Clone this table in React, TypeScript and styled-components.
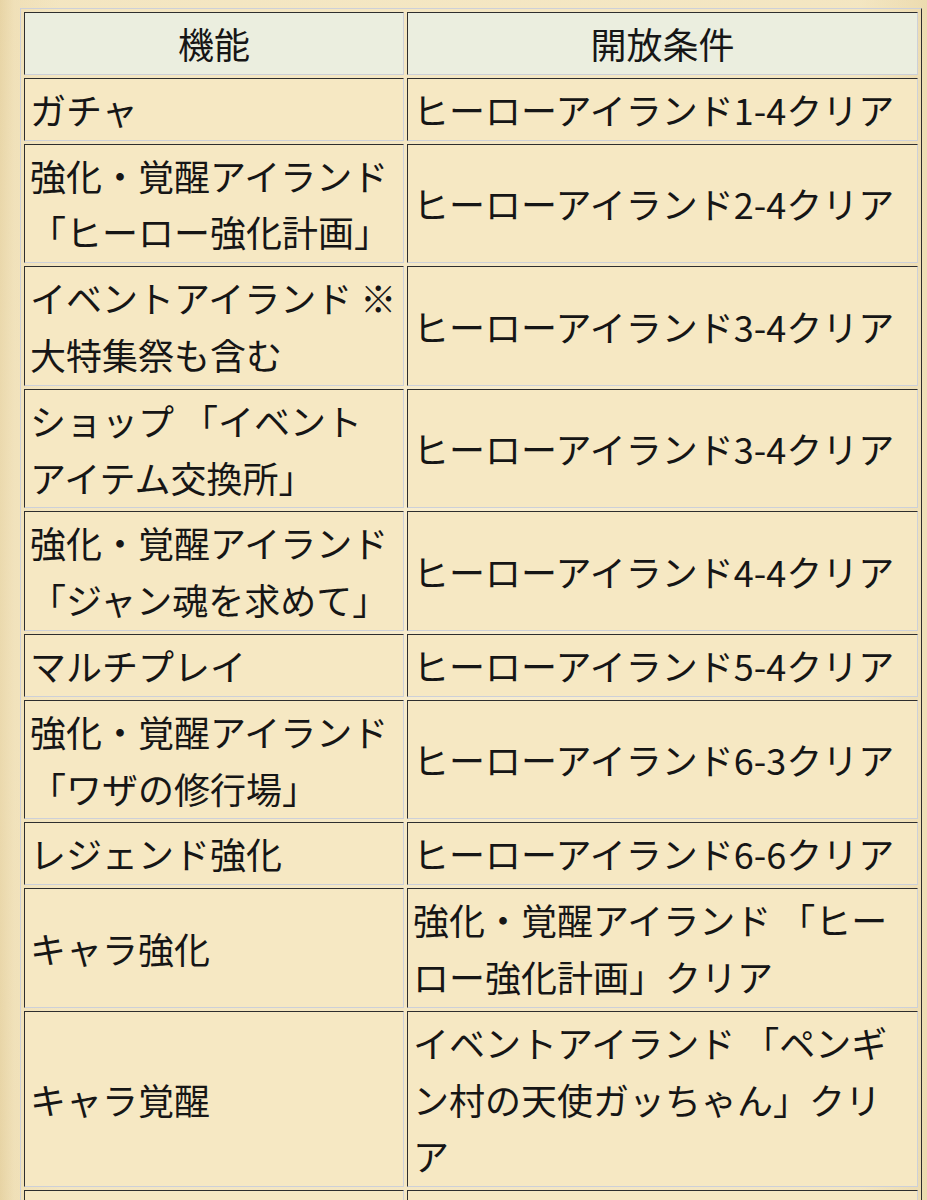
import React from "react";
import styled, { createGlobalStyle } from "styled-components";

const GlobalStyle = createGlobalStyle`
  html, body {
    margin: 0;
    padding: 0;
  }
  body {
    min-height: 1200px;
    background-color: #f1e3bd;
    background-image:
      radial-gradient(ellipse at 55% 45%, rgba(250, 240, 212, 0.9) 0%, rgba(245, 232, 198, 0.6) 45%, rgba(232, 212, 164, 0.0) 100%),
      linear-gradient(90deg, #e6d2a2 0px, #efdfb6 14px, #f3e5c0 60px, #f3e5c0 860px, #ead8aa 927px);
    font-family: "Noto Sans CJK JP", "Noto Sans", sans-serif;
    color: #161616;
  }
`;

const Page = styled.div`
  padding: 8px 5px 0 20px;
`;

const Table = styled.table`
  width: 902px;
  table-layout: fixed;
  border-collapse: separate;
  border-spacing: 3px;
  border-style: solid;
  border-width: 1px;
  border-color: #cdd0d8 #2e2e2e #2e2e2e #cdd0d8;
`;

const Col = styled.col<{ $w: number }>`
  width: ${(p) => p.$w}px;
`;

const Cell = styled.td<{ $head?: boolean }>`
  box-sizing: border-box;
  padding: 2px 5px;
  border-style: solid;
  border-width: 1px;
  border-color: #2e2e2e #cdd0d8 #cdd0d8 #2e2e2e;
  background: ${(p) => (p.$head ? "#ebeedf" : "#f6e8c3")};
  font-size: 36px;
  line-height: 56.8px;
  font-weight: 400;
  text-align: ${(p) => (p.$head ? "center" : "left")};
  vertical-align: middle;
  word-break: break-all;
  letter-spacing: 0;
`;

const rows: [string, string][] = [
  ["ガチャ", "ヒーローアイランド1-4クリア"],
  ["強化・覚醒アイランド 「ヒーロー強化計画」", "ヒーローアイランド2-4クリア"],
  ["イベントアイランド ※大特集祭も含む", "ヒーローアイランド3-4クリア"],
  ["ショップ 「イベントアイテム交換所」", "ヒーローアイランド3-4クリア"],
  ["強化・覚醒アイランド 「ジャン魂を求めて」", "ヒーローアイランド4-4クリア"],
  ["マルチプレイ", "ヒーローアイランド5-4クリア"],
  ["強化・覚醒アイランド 「ワザの修行場」", "ヒーローアイランド6-3クリア"],
  ["レジェンド強化", "ヒーローアイランド6-6クリア"],
  ["キャラ強化", "強化・覚醒アイランド 「ヒーロー強化計画」クリア"],
  ["キャラ覚醒", "イベントアイランド 「ペンギン村の天使ガッちゃん」クリア"],
  ["\u00a0", "\u00a0"],
];

export default function App() {
  return (
    <>
      <GlobalStyle />
      <Page>
        <Table>
          <colgroup>
            <Col $w={380} />
            <Col $w={511} />
          </colgroup>
          <thead>
            <tr>
              <Cell as="th" $head>
                機能
              </Cell>
              <Cell as="th" $head>
                開放条件
              </Cell>
            </tr>
          </thead>
          <tbody>
            {rows.map(([a, b], i) => (
              <tr key={i}>
                <Cell>{a}</Cell>
                <Cell>{b}</Cell>
              </tr>
            ))}
          </tbody>
        </Table>
      </Page>
    </>
  );
}
